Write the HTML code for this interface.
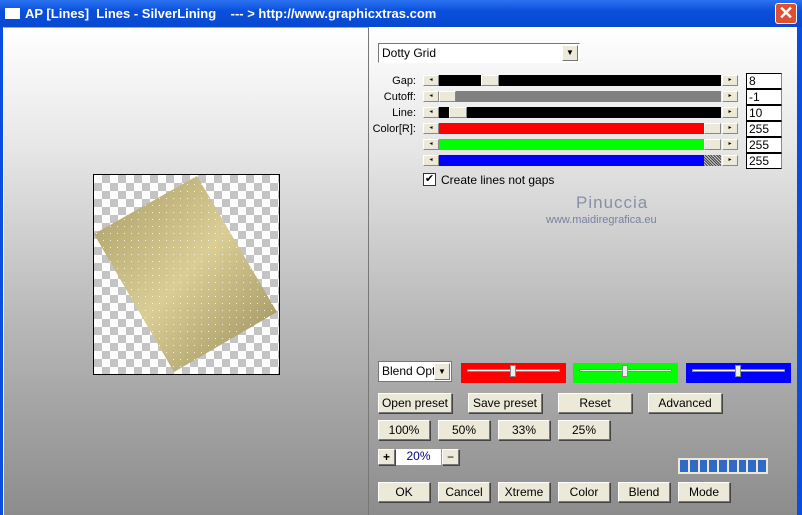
<!DOCTYPE html>
<html><head><style>
*{margin:0;padding:0;box-sizing:border-box}
body{width:802px;height:515px;overflow:hidden;background:#0a4ee0;font-family:"Liberation Sans",sans-serif;font-size:12px;position:relative}
.abs{position:absolute}
.title{left:0;top:0;width:802px;height:27px;background:linear-gradient(#2a72f0,#0a50dc 40%,#0848d0);color:#fff;font-weight:bold;font-size:13px}
.client{left:3px;top:27px;width:794px;height:488px;background:linear-gradient(#ffffff,#e6e6e6 25%,#b8b8b8 60%,#8c8c8c)}
.btn{position:absolute;background:#ece9d8;border:1px solid;border-color:#fff #777 #777 #fff;box-shadow:1px 1px 0 #444;text-align:center;font-size:12px;color:#000;line-height:18px;height:20px}
.sb{position:absolute;height:11px}
.arr{position:absolute;width:16px;height:11px;background:#ece9d8;border:1px solid;border-color:#fff #888 #888 #fff;font-size:6px;line-height:9px;text-align:center}
.thumb{position:absolute;top:0;height:11px;background:#ece9d8;border:1px solid;border-color:#fff #888 #888 #fff}
.val{position:absolute;left:746px;width:36px;height:16px;background:#fff;border:1px solid #000;border-right-color:#888;font-size:12px;line-height:14px;padding-left:2px}
.lbl{position:absolute;right:386px;font-size:11px;text-align:right}
</style></head><body>
<div class="abs title">
 <div class="abs" style="left:5px;top:8px;width:15px;height:11px;background:#fff;border-top:2px solid #fff"></div>
 <div class="abs" style="left:25px;top:6px;white-space:pre">AP [Lines]  Lines - SilverLining    --- &gt; http://www.graphicxtras.com</div>
 <div class="abs" style="left:775px;top:3px;width:22px;height:21px;background:#e05030;border:1px solid #fff;border-radius:3px;color:#fff;font-size:18px;line-height:18px;text-align:center">✕</div>
</div>
<div class="abs client">
 <div class="abs" style="left:0;top:0;width:366px;height:488px;border-left:1px solid #fff;border-top:1px solid #aaa;border-right:1px solid #777"></div>
</div>
<!-- preview -->
<div class="abs" style="left:93px;top:174px;width:187px;height:201px;border:1px solid #000;background-color:#fff;background-image:linear-gradient(45deg,#c4c4c4 25%,transparent 25%,transparent 75%,#c4c4c4 75%),linear-gradient(45deg,#c4c4c4 25%,transparent 25%,transparent 75%,#c4c4c4 75%);background-size:16px 16px;background-position:0 0,8px 8px;overflow:hidden">
<svg width="187" height="201" style="position:absolute;left:-1px;top:-1px">
<defs><linearGradient id="g" x1="0" y1="0" x2="1" y2="1"><stop offset="0" stop-color="#a89c66"/><stop offset="0.5" stop-color="#dacd95"/><stop offset="1" stop-color="#988c5a"/></linearGradient>
<pattern id="d" width="7" height="7" patternUnits="userSpaceOnUse"><rect x="3" y="3" width="1" height="1" fill="#fff"/></pattern></defs>
<polygon points="104,2 1,60 81,198 184,138" fill="url(#g)"/>
<polygon points="104,2 1,60 81,198 184,138" fill="url(#d)" opacity="0.8"/>
</svg></div>
<!-- right controls -->
<div class="abs" style="left:378px;top:43px;width:202px;height:20px;background:#fff;border:1px solid #888;border-color:#777 #fff #fff #777;font-size:12px;line-height:18px;padding-left:3px">Dotty Grid
 <div class="abs" style="right:1px;top:1px;width:16px;height:16px;background:#ece9d8;border:1px solid;border-color:#fff #777 #777 #fff;font-size:8px;line-height:14px;text-align:center">▼</div></div>
<div class="lbl" style="top:75px">Gap:</div>
<div class="lbl" style="top:91px">Cutoff:</div>
<div class="lbl" style="top:107px">Line:</div>
<div class="lbl" style="top:123px">Color[R]:</div>
<!-- sliders: x 423..738 -->
<div class="sb" style="left:423px;top:75px;width:315px"><div class="arr" style="left:0">◂</div><div class="abs" style="left:16px;top:0;width:282px;height:11px;background:#000"></div><div class="thumb" style="left:58px;width:18px"></div><div class="arr" style="left:299px">▸</div></div>
<div class="sb" style="left:423px;top:91px;width:315px"><div class="arr" style="left:0">◂</div><div class="abs" style="left:16px;top:0;width:282px;height:11px;background:#808080"></div><div class="thumb" style="left:16px;width:17px"></div><div class="arr" style="left:299px">▸</div></div>
<div class="sb" style="left:423px;top:107px;width:315px"><div class="arr" style="left:0">◂</div><div class="abs" style="left:16px;top:0;width:282px;height:11px;background:#000"></div><div class="thumb" style="left:26px;width:18px"></div><div class="arr" style="left:299px">▸</div></div>
<div class="sb" style="left:423px;top:123px;width:315px"><div class="arr" style="left:0">◂</div><div class="abs" style="left:16px;top:0;width:265px;height:11px;background:#f00"></div><div class="thumb" style="left:281px;width:17px"></div><div class="arr" style="left:299px">▸</div></div>
<div class="sb" style="left:423px;top:139px;width:315px"><div class="arr" style="left:0">◂</div><div class="abs" style="left:16px;top:0;width:265px;height:11px;background:#0f0"></div><div class="thumb" style="left:281px;width:17px"></div><div class="arr" style="left:299px">▸</div></div>
<div class="sb" style="left:423px;top:155px;width:315px"><div class="arr" style="left:0">◂</div><div class="abs" style="left:16px;top:0;width:265px;height:11px;background:#00f"></div><div class="abs" style="left:281px;top:0;width:17px;height:11px;background:repeating-linear-gradient(45deg,#444 0 1px,#ccc 1px 2px)"></div><div class="arr" style="left:299px">▸</div></div>
<div class="val" style="top:73px">8</div>
<div class="val" style="top:89px">-1</div>
<div class="val" style="top:105px">10</div>
<div class="val" style="top:121px">255</div>
<div class="val" style="top:137px">255</div>
<div class="val" style="top:153px">255</div>
<div class="abs" style="left:423px;top:173px;width:13px;height:13px;background:#fff;border:1px solid #333;font-size:11px;line-height:11px;text-align:center">✔</div>
<div class="abs" style="left:441px;top:173px;font-size:12px">Create lines not gaps</div>
<div class="abs" style="left:576px;top:193px;font-size:17px;color:#8890a8;letter-spacing:1px">Pinuccia</div>
<div class="abs" style="left:546px;top:214px;font-size:11px;color:#7880a0">www.maidiregrafica.eu</div>
<!-- blend row -->
<div class="abs" style="left:378px;top:361px;width:74px;height:21px;background:#fff;border:1px solid #777;font-size:12px;line-height:19px;padding-left:3px;overflow:hidden;white-space:nowrap">Blend Optio
 <div class="abs" style="right:1px;top:1px;width:16px;height:17px;background:#ece9d8;border:1px solid;border-color:#fff #777 #777 #fff;font-size:8px;line-height:15px;text-align:center">▼</div></div>
<div class="abs" style="left:461px;top:363px;width:105px;height:20px;background:#f00"><div class="abs" style="left:6px;top:6px;width:93px;height:3px;background:#fff;border:1px solid #888"></div><div class="abs" style="left:49px;top:2px;width:6px;height:12px;background:#eee;border:1px solid #888"></div></div>
<div class="abs" style="left:573px;top:363px;width:105px;height:20px;background:#0f0"><div class="abs" style="left:6px;top:6px;width:93px;height:3px;background:#fff;border:1px solid #888"></div><div class="abs" style="left:49px;top:2px;width:6px;height:12px;background:#eee;border:1px solid #888"></div></div>
<div class="abs" style="left:686px;top:363px;width:105px;height:20px;background:#00f"><div class="abs" style="left:6px;top:6px;width:93px;height:3px;background:#fff;border:1px solid #888"></div><div class="abs" style="left:49px;top:2px;width:6px;height:12px;background:#eee;border:1px solid #888"></div></div>
<div class="btn" style="left:378px;top:393px;width:74px">Open preset</div>
<div class="btn" style="left:468px;top:393px;width:74px">Save preset</div>
<div class="btn" style="left:558px;top:393px;width:74px">Reset</div>
<div class="btn" style="left:648px;top:393px;width:74px">Advanced</div>
<div class="btn" style="left:378px;top:420px;width:52px">100%</div>
<div class="btn" style="left:438px;top:420px;width:52px">50%</div>
<div class="btn" style="left:498px;top:420px;width:52px">33%</div>
<div class="btn" style="left:558px;top:420px;width:52px">25%</div>
<div class="btn" style="left:378px;top:449px;width:17px;height:16px;line-height:14px;font-weight:bold">+</div>
<div class="abs" style="left:396px;top:449px;width:45px;height:16px;background:#fff;color:#000080;text-align:center;line-height:15px">20%</div>
<div class="btn" style="left:442px;top:449px;width:17px;height:16px;line-height:14px">−</div>
<div class="abs" style="left:678px;top:458px;width:90px;height:16px;background:#ece9d8;padding:2px;display:flex;gap:2px">
 <i style="flex:1;background:#316ac5"></i><i style="flex:1;background:#316ac5"></i><i style="flex:1;background:#316ac5"></i><i style="flex:1;background:#316ac5"></i><i style="flex:1;background:#316ac5"></i><i style="flex:1;background:#316ac5"></i><i style="flex:1;background:#316ac5"></i><i style="flex:1;background:#316ac5"></i><i style="flex:1;background:#316ac5"></i></div>
<div class="btn" style="left:378px;top:482px;width:52px">OK</div>
<div class="btn" style="left:438px;top:482px;width:52px">Cancel</div>
<div class="btn" style="left:498px;top:482px;width:52px">Xtreme</div>
<div class="btn" style="left:558px;top:482px;width:52px">Color</div>
<div class="btn" style="left:618px;top:482px;width:52px">Blend</div>
<div class="btn" style="left:678px;top:482px;width:52px">Mode</div>
</body></html>
